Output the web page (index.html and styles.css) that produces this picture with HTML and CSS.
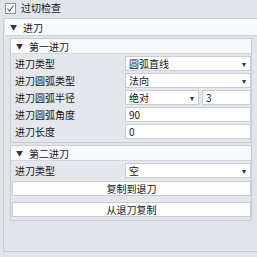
FILE: index.html
```html
<!DOCTYPE html>
<html>
<head>
<meta charset="utf-8">
<link rel="stylesheet" href="styles.css">
</head>
<body>
<div class="top">
  <span class="check"><svg width="9" height="9" viewBox="0 0 9 9"><path d="M1.5 4.5 L3.5 7 L7.5 1.5" fill="none" stroke="#555" stroke-width="1.1"/></svg></span>
  <span class="toplabel">过切检查</span>
</div>
<div class="outer">
  <div class="ohead"><span class="tri">▼</span>进刀</div>
  <div class="obody">
    <div class="group g1">
      <div class="ghead"><span class="tri">▼</span>第一进刀</div>
      <div class="rows">
        <div class="row"><div class="lab">进刀类型</div><div class="val"><div class="sel"><span>圆弧直线</span><span class="arr">▾</span></div></div></div>
        <div class="row"><div class="lab">进刀圆弧类型</div><div class="val"><div class="sel"><span>法向</span><span class="arr">▾</span></div></div></div>
        <div class="row"><div class="lab">进刀圆弧半径</div><div class="val split"><div class="sel grow"><span>绝对</span><span class="arr">▾</span></div><div class="inp small">3</div></div></div>
        <div class="row"><div class="lab">进刀圆弧角度</div><div class="val"><div class="inp">90</div></div></div>
        <div class="row"><div class="lab">进刀长度</div><div class="val"><div class="inp">0</div></div></div>
      </div>
    </div>
    <div class="group g2">
      <div class="ghead"><span class="tri">▼</span>第二进刀</div>
      <div class="rows">
        <div class="row"><div class="lab">进刀类型</div><div class="val"><div class="sel"><span>空</span><span class="arr">▾</span></div></div></div>
      </div>
      <div class="btns">
        <div class="btn">复制到退刀</div>
        <div class="btn">从退刀复制</div>
      </div>
    </div>
  </div>
</div>
</body>
</html>
```
FILE: styles.css
```css
html, body {
  margin: 0;
  padding: 0;
}
body {
  width: 257px;
  height: 257px;
  background: #e1e5eb;
  font-family: "Noto Sans CJK SC", "Noto Sans", sans-serif;
  font-size: 10px;
  color: #151515;
  overflow: hidden;
}
.top {
  height: 18px;
  display: flex;
  align-items: center;
  padding-left: 5px;
  box-sizing: border-box;
  padding-bottom: 2px;
}
.check {
  width: 9px;
  height: 9px;
  border: 1px solid #8c9199;
  background: #fff;
  display: flex;
}
.toplabel {
  margin-left: 5px;
  line-height: 12px;
}
.outer {
  margin-left: 3px;
  height: 234px;
  border-left: 1px solid #c6cad1;
  border-top: 1px solid #c6cad1;
  border-bottom: 1px solid #c6cad1;
  box-sizing: border-box;
}
.ohead {
  height: 17px;
  background: #f9fafc;
  border-bottom: 1px solid #d0d4da;
  margin-left: 1px;
  display: flex;
  align-items: center;
  padding-left: 5px;
  box-sizing: border-box;
}
.tri {
  font-size: 7px;
  margin-right: 6px;
  color: #333;
}
.obody {
  padding: 2px 5px 0 6px;
}
.group {
  border: 1px solid #c8ccd3;
  background: #e4e7ec;
}
.g2 {
  margin-top: 2px;
}
.ghead {
  height: 15px;
  background: #f9fafc;
  border-bottom: 1px solid #d3d6dc;
  display: flex;
  align-items: center;
  padding-left: 5px;
  box-sizing: border-box;
}
.rows {
  padding: 1px 0 2px 0;
}
.row {
  display: flex;
  height: 17px;
  align-items: center;
}
.lab {
  width: 114px;
  padding-left: 4px;
  box-sizing: border-box;
}
.val {
  flex: 1;
  display: flex;
  gap: 3px;
}
.sel, .inp {
  flex: 1;
  height: 15px;
  background: #fff;
  border: 1px solid #c9cdd3;
  box-sizing: border-box;
  display: flex;
  align-items: center;
  justify-content: space-between;
  padding: 0 4px 0 3px;
  line-height: 13px;
}
.grow {
  flex: 0 0 74px;
}
.small {
  flex: 1;
}
.arr {
  font-size: 8px;
  color: #333;
}
.btns {
  padding: 0 0 3px 1px;
  display: flex;
  flex-direction: column;
  gap: 6px;
}
.btn {
  height: 15px;
  background: #fdfdfe;
  border: 1px solid #c9cdd3;
  box-sizing: border-box;
  display: flex;
  align-items: center;
  justify-content: center;
  line-height: 13px;
}
```
